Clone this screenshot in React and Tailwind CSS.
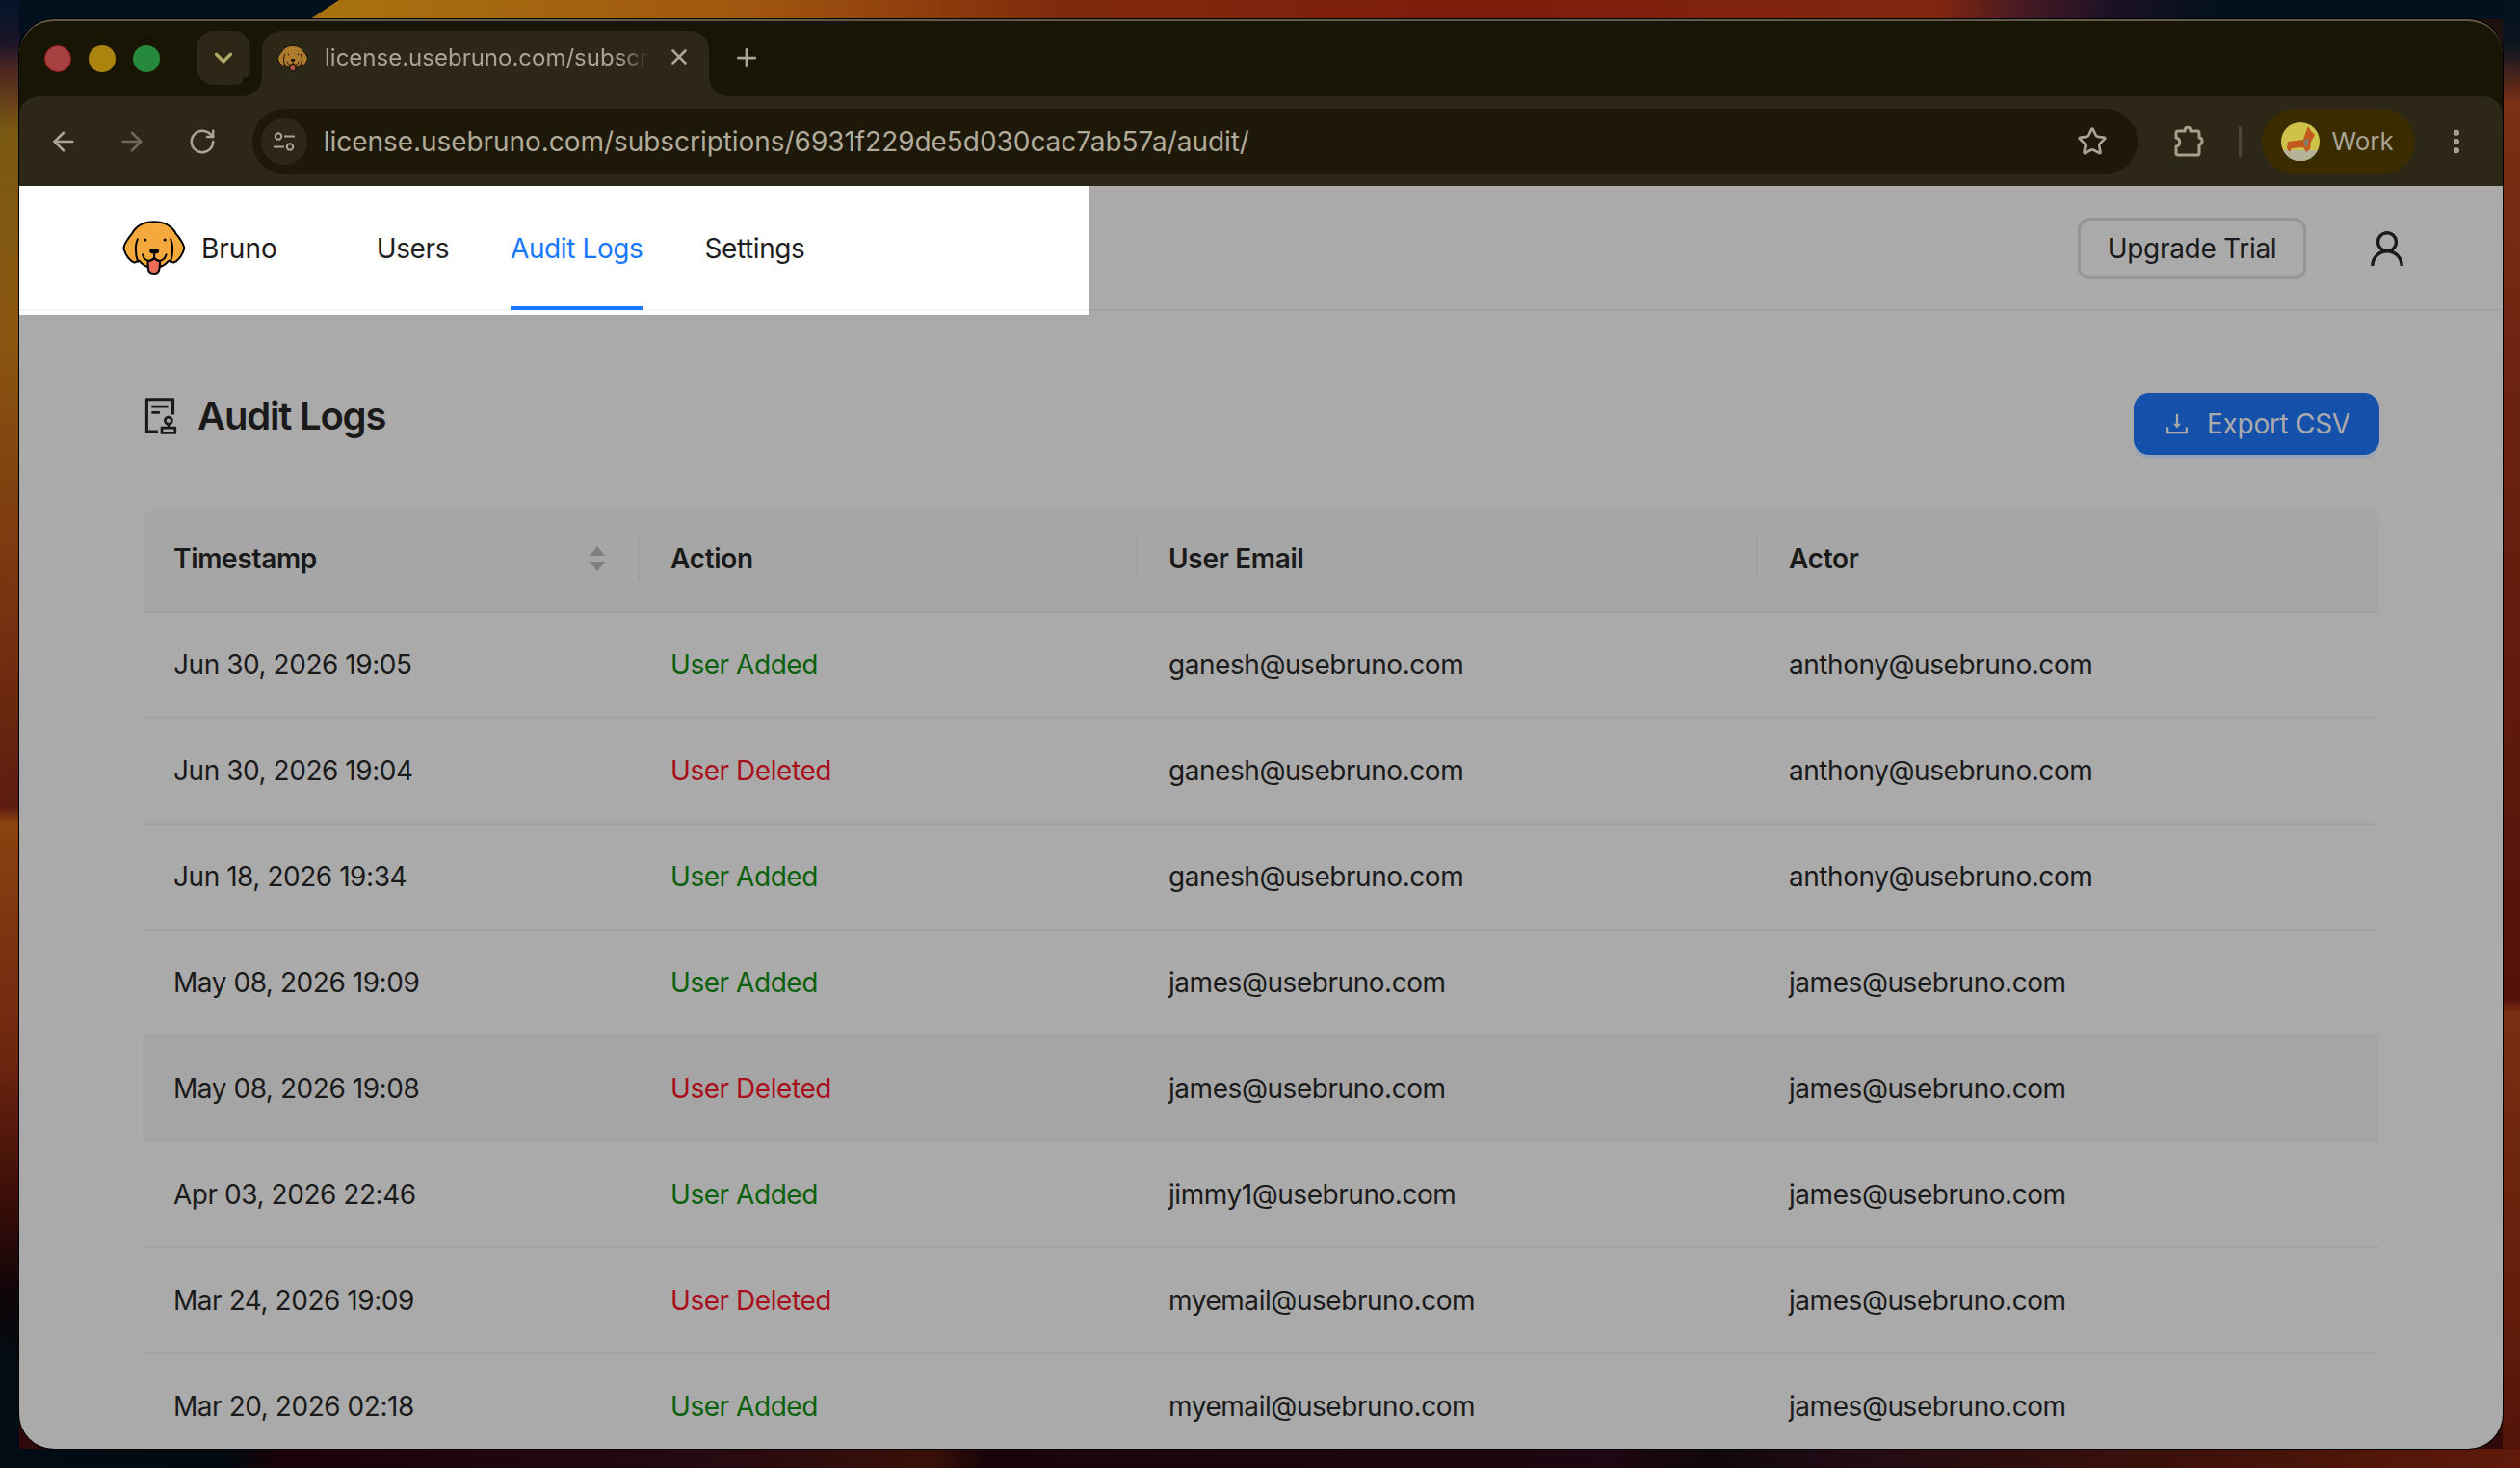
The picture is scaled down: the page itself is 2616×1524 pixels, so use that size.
import { ArrowLeft, ArrowRight, ChevronDown, EllipsisVertical, Plus, RotateCw, Star, X } from 'lucide-react';
import { AiOutlineAudit, AiOutlineDownload, AiOutlineUser } from 'react-icons/ai';

const ROWS = [
  { time: 'Jun 30, 2026 19:05', added: true, email: 'ganesh@usebruno.com', actor: 'anthony@usebruno.com' },
  { time: 'Jun 30, 2026 19:04', added: false, email: 'ganesh@usebruno.com', actor: 'anthony@usebruno.com' },
  { time: 'Jun 18, 2026 19:34', added: true, email: 'ganesh@usebruno.com', actor: 'anthony@usebruno.com' },
  { time: 'May 08, 2026 19:09', added: true, email: 'james@usebruno.com', actor: 'james@usebruno.com' },
  { time: 'May 08, 2026 19:08', added: false, email: 'james@usebruno.com', actor: 'james@usebruno.com', hover: true },
  { time: 'Apr 03, 2026 22:46', added: true, email: 'jimmy1@usebruno.com', actor: 'james@usebruno.com' },
  { time: 'Mar 24, 2026 19:09', added: false, email: 'myemail@usebruno.com', actor: 'james@usebruno.com' },
  { time: 'Mar 20, 2026 02:18', added: true, email: 'myemail@usebruno.com', actor: 'james@usebruno.com' },
];

function Wallpaper() {
  return (
    <svg className="absolute inset-0" width="2616" height="1524">
      <defs>
        <linearGradient id="top">
          <stop offset="0" stopColor="#03111f" />
          <stop offset="0.13" stopColor="#a8720f" />
          <stop offset="0.3" stopColor="#a0560f" />
          <stop offset="0.42" stopColor="#7f2a0c" />
          <stop offset="0.58" stopColor="#7d1d0c" />
          <stop offset="0.77" stopColor="#80260f" />
          <stop offset="0.8" stopColor="#4a1a22" />
          <stop offset="0.84" stopColor="#1a1026" />
          <stop offset="0.88" stopColor="#03111f" />
        </linearGradient>
        <linearGradient id="left" x2="0" y2="1">
          <stop offset="0" stopColor="#04142a" />
          <stop offset="0.03" stopColor="#1c1528" />
          <stop offset="0.05" stopColor="#52291f" />
          <stop offset="0.09" stopColor="#7a5a12" />
          <stop offset="0.23" stopColor="#8a5510" />
          <stop offset="0.4" stopColor="#7a3510" />
          <stop offset="0.55" stopColor="#5c1c10" />
          <stop offset="0.56" stopColor="#8a4210" />
          <stop offset="0.72" stopColor="#6e2510" />
          <stop offset="0.82" stopColor="#3a0d08" />
          <stop offset="0.88" stopColor="#100508" />
          <stop offset="0.93" stopColor="#020c14" />
        </linearGradient>
        <linearGradient id="right" x2="0" y2="1">
          <stop offset="0" stopColor="#03111f" />
          <stop offset="0.03" stopColor="#0c1420" />
          <stop offset="0.07" stopColor="#7a3015" />
          <stop offset="0.27" stopColor="#6c2210" />
          <stop offset="0.68" stopColor="#521208" />
          <stop offset="0.69" stopColor="#7a2e12" />
          <stop offset="0.92" stopColor="#5e1a0a" />
          <stop offset="1" stopColor="#4f1208" />
        </linearGradient>
        <linearGradient id="bottom">
          <stop offset="0" stopColor="#020c14" />
          <stop offset="0.09" stopColor="#020a10" />
          <stop offset="0.11" stopColor="#1a0208" />
          <stop offset="0.27" stopColor="#240812" />
          <stop offset="0.37" stopColor="#3a1008" />
          <stop offset="0.39" stopColor="#180408" />
          <stop offset="0.64" stopColor="#1e0612" />
          <stop offset="0.68" stopColor="#100808" />
          <stop offset="0.72" stopColor="#1e0a14" />
          <stop offset="0.85" stopColor="#3a100a" />
          <stop offset="1" stopColor="#5f1a0a" />
        </linearGradient>
      </defs>
      <rect width="2616" height="1524" fill="#300a0a" />
      <rect width="2616" height="20" fill="url(#top)" />
      <polygon points="0,0 352,0 322,20 0,20" fill="#03111f" />
      <rect width="20" height="1524" fill="url(#left)" />
      <rect x="2598" width="18" height="1524" fill="url(#right)" />
      <rect y="1504" width="2616" height="20" fill="url(#bottom)" />
      <rect x="20" y="20" width="80" height="80" fill="#03111f" />
      <rect x="2500" y="20" width="98" height="80" fill="#201010" />
    </svg>
  );
}

function DogLogo({ className }) {
  return (
    <svg viewBox="0 0 195 168" className={className} fill="none" stroke="#000" strokeWidth="6" strokeLinecap="round" strokeLinejoin="round">
      <path
        fill="#f5a83c"
        d="M97 4C128 4 152 16 165 40C178 56 192 72 191 88C186 108 172 126 158 131L143 125C134 137 122 142 116 144L78 144C70 142 60 136 51 125L36 131C22 126 8 108 3 88C2 72 16 56 29 40C42 16 66 4 97 4Z"
      />
      <path d="M46 58C38 75 38 105 47 128" />
      <path d="M149 58C157 75 157 105 148 128" />
      <path fill="#ef6c57" d="M78 128C84 126 92 122 97 118C102 122 110 126 116 128L114 150C112 162 104 165 97 165C88 165 80 160 79 150Z" />
      <path d="M62 106C66 125 85 132 98 117C112 132 130 125 135 106" />
      <path d="M98 100V117" />
      <circle cx="70" cy="60" r="4.5" fill="#000" stroke="none" />
      <circle cx="131" cy="60" r="4.5" fill="#000" stroke="none" />
      <ellipse cx="98" cy="95" rx="15" ry="8" fill="#000" stroke="none" />
    </svg>
  );
}

function WorkAvatar() {
  return (
    <svg viewBox="0 0 40 40" className="h-[40px] w-[40px]">
      <circle cx="20" cy="20" r="20" fill="#cfc24a" />
      <path d="M2 29a20 20 0 0 0 36 0Z" fill="#b5b29a" />
      <polygon points="7,20 23,18 26,9 28,4 31,9 35,13 31,20 30,28 26,31 23,26 11,27 9,31 6,27" fill="#c25a1c" />
      <polygon points="23,18 29,17 28,24 25,26" fill="#8a7a66" />
    </svg>
  );
}

function SiteInfoIcon() {
  return (
    <svg viewBox="0 0 24 24" className="h-[24px] w-[24px]" fill="none" stroke="#a9a493" strokeWidth="2">
      <circle cx="6" cy="6.5" r="3.2" />
      <path d="M12 6.5H23" />
      <path d="M1 17.5H12" />
      <circle cx="18" cy="17.5" r="3.2" />
    </svg>
  );
}

function PuzzleIcon() {
  return (
    <svg viewBox="0 0 32 34" className="h-[34px] w-[32px]" fill="none" stroke="#a8a08c" strokeWidth="3" strokeLinejoin="round">
      <path d="M5 6H12C12 1 18 1 18 6H25Q27 6 27 8V13C31 13 31 20 27 20V29Q27 31 25 31H5Q3 31 3 29V22C8 21 8 14 3 13V8Q3 6 5 6Z" />
    </svg>
  );
}

function SortCarets() {
  return (
    <svg viewBox="0 0 16 26" className="h-[26px] w-[16px]" fill="#7f7f7f">
      <polygon points="8,0 16,10 0,10" />
      <polygon points="0,16 16,16 8,26" />
    </svg>
  );
}

function TabStrip() {
  return (
    <div className="flex h-[78px] shrink-0 items-start pl-[26px] pt-[10px]">
      <div className="mt-[15px] flex gap-[18px]">
        <div className="h-[28px] w-[28px] rounded-full border border-[#9a1c1c] bg-[#a64141]" />
        <div className="h-[28px] w-[28px] rounded-full bg-[#aa840e]" />
        <div className="h-[28px] w-[28px] rounded-full bg-[#26883c]" />
      </div>
      <div className="ml-[38px] flex h-[56px] w-[56px] items-center justify-center rounded-[18px] bg-[#2d2717]">
        <ChevronDown size={30} strokeWidth={2.6} className="text-[#b3a868]" />
      </div>
      <div className="relative ml-[12px] flex h-[68px] w-[464px] items-start rounded-t-[20px] bg-[#2d2717] pl-[16px] pt-[13px]">
        <div className="absolute bottom-0 left-[-20px] h-[20px] w-[20px] bg-[radial-gradient(circle_at_0_0,#181505_19.5px,#2d2717_20px)]" />
        <div className="absolute bottom-0 right-[-20px] h-[20px] w-[20px] bg-[radial-gradient(circle_at_100%_0,#181505_19.5px,#2d2717_20px)]" />
        <DogLogo className="h-[31px] w-[32px] opacity-65" />
        <span className="ml-[17px] mt-[-2px] w-[338px] whitespace-nowrap text-[24px] leading-[34px] text-[#a9a493] [mask-image:linear-gradient(to_right,#000_90%,transparent_100%)]">
          license.usebruno.com/subscr
        </span>
        <X size={26} strokeWidth={2.4} className="ml-[17px] mt-[1px] text-[#aaa594]" />
      </div>
      <Plus size={30} strokeWidth={2.2} className="ml-[24px] mt-[13px] text-[#a9a493]" />
    </div>
  );
}

function Toolbar() {
  return (
    <div className="flex h-[93px] shrink-0 items-center rounded-t-[20px] bg-[#2d2717] pl-[30px] pr-[32px]">
      <ArrowLeft size={32} strokeWidth={2} className="text-[#a9a493]" />
      <ArrowRight size={32} strokeWidth={2} className="ml-[39px] text-[#6d6857]" />
      <RotateCw size={30} strokeWidth={2} className="ml-[42px] text-[#a9a493]" />
      <div className="ml-[37px] flex h-[68px] w-[1963px] items-center rounded-full bg-[#1e1809] pl-[9px] pr-[31px]">
        <div className="flex h-[48px] w-[48px] items-center justify-center rounded-full bg-[#2d2717]">
          <SiteInfoIcon />
        </div>
        <span className="ml-[17px] flex-1 text-[28px] tracking-[-0.05px] text-[#b0ab9a]">
          license.usebruno.com/subscriptions/6931f229de5d030cac7ab57a/audit/
        </span>
        <Star size={32} strokeWidth={2} className="text-[#a9a493]" />
      </div>
      <div className="ml-[37px]">
        <PuzzleIcon />
      </div>
      <div className="ml-[36px] h-[32px] w-[3px] rounded-full bg-[#4c4735]" />
      <div className="ml-[21px] flex h-[68px] w-[159px] items-center rounded-full bg-[#3a2c00] pl-[20px]">
        <WorkAvatar />
        <span className="ml-[12px] text-[26px] text-[#a9a493]">Work</span>
      </div>
      <EllipsisVertical size={32} strokeWidth={2.6} className="ml-[27px] text-[#a9a493]" />
    </div>
  );
}

function AppHeader() {
  return (
    <div className="flex h-[134px] shrink-0 items-start bg-[#aaaaaa]">
      <div className="h-[134px] w-[1111px] bg-white">
        <div className="flex h-[130px] items-center border-b-2 border-[#f5f5f5] pl-[107px]">
          <DogLogo className="h-[56px] w-[66px]" />
          <span className="ml-[16px] pt-[2px] text-[28px] text-[#1a1a1a]">Bruno</span>
          <div className="ml-[71px] flex h-[130px] items-center text-[28px] tracking-[-0.4px] text-[#1f1f1f]">
            <a className="px-[32px] pt-[2px]">Users</a>
            <a className="flex h-[130px] items-center px-[32px] text-[#1677ff]">
              <span className="flex h-[130px] items-center border-b-[4px] border-[#1677ff] pt-[6px]">Audit Logs</span>
            </a>
            <a className="px-[32px] pt-[2px]">Settings</a>
          </div>
        </div>
      </div>
      <div className="flex h-[130px] flex-1 items-center justify-end border-b-2 border-[#a3a3a3] pr-[97px] pt-[2px]">
        <button className="h-[64px] w-[237px] rounded-[12px] border-[3px] border-[#959595] text-[28px] tracking-[-0.3px] text-[#1a1a1a]">
          Upgrade Trial
        </button>
        <AiOutlineUser className="ml-[61px] text-[46px] text-[#1a1a1a]" />
      </div>
    </div>
  );
}

function AuditTable() {
  return (
    <table className="w-full table-fixed border-separate border-spacing-0 text-[28px] tracking-[-0.45px] text-[#1a1a1a]">
      <colgroup>
        <col className="w-[516px]" />
        <col className="w-[517px]" />
        <col className="w-[644px]" />
        <col />
      </colgroup>
      <thead>
        <tr className="h-[110px] bg-[#a6a6a6] text-left">
          <th className="relative rounded-tl-[16px] border-b-2 border-[#a0a0a0] pl-[32px] pr-[36px] font-semibold tracking-[-0.3px]">
            <div className="flex items-center justify-between">
              Timestamp
              <SortCarets />
            </div>
            <span className="absolute right-0 top-[32px] h-[44px] w-[2px] bg-[#a0a0a0]" />
          </th>
          <th className="relative border-b-2 border-[#a0a0a0] pl-[32px] font-semibold tracking-[-0.3px]">
            Action
            <span className="absolute right-0 top-[32px] h-[44px] w-[2px] bg-[#a0a0a0]" />
          </th>
          <th className="relative border-b-2 border-[#a0a0a0] pl-[32px] font-semibold tracking-[-0.3px]">
            User Email
            <span className="absolute right-0 top-[32px] h-[44px] w-[2px] bg-[#a0a0a0]" />
          </th>
          <th className="rounded-tr-[16px] border-b-2 border-[#a0a0a0] pl-[32px] font-semibold tracking-[-0.3px]">Actor</th>
        </tr>
      </thead>
      <tbody>
        {ROWS.map((row) => (
          <tr key={row.time} className={`h-[110px] ${row.hover ? 'bg-[#a5a5a5]' : ''}`}>
            <td className="border-b-2 border-[#a3a3a3] pl-[32px]">{row.time}</td>
            <td className={`border-b-2 border-[#a3a3a3] pl-[32px] ${row.added ? 'text-[#0b610b]' : 'text-[#a80f1a]'}`}>
              {row.added ? 'User Added' : 'User Deleted'}
            </td>
            <td className="border-b-2 border-[#a3a3a3] pl-[32px]">{row.email}</td>
            <td className="border-b-2 border-[#a3a3a3] pl-[32px]">{row.actor}</td>
          </tr>
        ))}
      </tbody>
    </table>
  );
}

export default function App() {
  return (
    <div className="relative h-[1524px] w-[2616px] overflow-hidden font-['Inter',sans-serif]">
      <Wallpaper />
      <div className="relative ml-[20px] mt-[20px] flex h-[1484px] w-[2578px] flex-col overflow-hidden rounded-[36px] border-t-2 border-[#5f5b48] bg-[#181505] ring-1 ring-black">
        <TabStrip />
        <Toolbar />
        <AppHeader />
        <div className="flex-1 bg-[#aaaaaa] px-[128px] pt-[81px]">
          <div className="mb-[54px] flex h-[64px] items-start justify-between">
            <div className="flex items-center">
              <AiOutlineAudit className="ml-[-3px] text-[44px] text-[#1a1a1a]" />
              <h1 className="ml-[16px] text-[40px] leading-[48px] font-semibold tracking-[-1.2px] text-[#1a1a1a]">Audit Logs</h1>
            </div>
            <button className="flex h-[64px] w-[255px] items-center justify-center rounded-[16px] bg-[#1550ab] text-[28px] tracking-[-0.3px] text-[#aaaaaa] shadow-[0_4px_0_#96a5b5]">
              <AiOutlineDownload className="mr-[16px] text-[30px]" />
              Export CSV
            </button>
          </div>
          <AuditTable />
        </div>
      </div>
    </div>
  );
}
